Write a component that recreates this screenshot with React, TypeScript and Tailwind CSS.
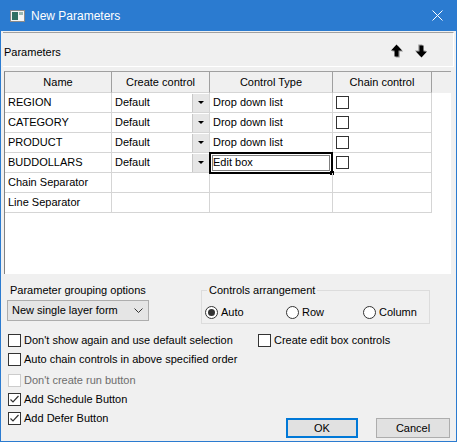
import { ReactNode } from 'react';

const ui = { fontFamily: '"Liberation Sans", Arial, sans-serif' };
const ms = { fontFamily: '"Liberation Sans", Arial, sans-serif' };

const rows = [
  { name: 'REGION', create: 'Default', type: 'Drop down list', check: true },
  { name: 'CATEGORY', create: 'Default', type: 'Drop down list', check: true },
  { name: 'PRODUCT', create: 'Default', type: 'Drop down list', check: true },
  { name: 'BUDDOLLARS', create: 'Default', type: 'Edit box', check: true, editing: true },
  { name: 'Chain Separator', create: '', type: '', check: false },
  { name: 'Line Separator', create: '', type: '', check: false },
];

function AppIcon() {
  return (
    <svg width="15" height="12" viewBox="0 0 15 12">
      <rect x="0.5" y="0.5" width="14" height="11" fill="#f4f4f4" stroke="#8a8a8a" />
      <rect x="2" y="2" width="6" height="8" fill="#2f6f63" />
      <rect x="9" y="2" width="4" height="3" fill="#9bb8b2" />
    </svg>
  );
}

function Arrow({ down }: { down?: boolean }) {
  return (
    <svg width="13" height="14" viewBox="0 0 13 14" className={down ? 'rotate-180' : ''}>
      <path d="M5.5 0.5 L11 6.5 L7.5 6.5 L7.5 12.5 L3.5 12.5 L3.5 6.5 L0 6.5 Z" fill="#9a9a9a" transform="translate(1.2 1)" />
      <path d="M5.5 0.5 L11 6.5 L7.5 6.5 L7.5 12.5 L3.5 12.5 L3.5 6.5 L0 6.5 Z" fill="#000" />
    </svg>
  );
}

function Check({ checked, disabled, children }: { checked?: boolean; disabled?: boolean; children: ReactNode }) {
  return (
    <label className={`flex items-center gap-[3px] text-[11px] ${disabled ? 'text-[#6d6d6d]' : 'text-black'}`} style={ui}>
      <span
        className={`w-[13px] h-[13px] border bg-white flex items-center justify-center ${
          disabled ? 'border-[#cccccc]' : 'border-[#333333]'
        }`}
      >
        {checked && (
          <svg width="11" height="11" viewBox="0 0 11 11">
            <path d="M1.5 5.5 L4 8 L9.5 2" fill="none" stroke="#333" strokeWidth="1.2" />
          </svg>
        )}
      </span>
      <span className="leading-none whitespace-nowrap">{children}</span>
    </label>
  );
}

function Radio({ on, children }: { on?: boolean; children: ReactNode }) {
  return (
    <label className="flex items-center gap-[3px] text-[11px]" style={ui}>
      <span className="w-[13px] h-[13px] rounded-full border border-[#333333] bg-white flex items-center justify-center">
        {on && <span className="w-[7px] h-[7px] rounded-full bg-[#333333]" />}
      </span>
      <span className="leading-none">{children}</span>
    </label>
  );
}

export default function App() {
  return (
    <div className="w-[457px] h-[442px] bg-[#f0f0f0] border border-t-0 border-[#2b7bd0] flex flex-col overflow-hidden text-black">
      {/* Title bar */}
      <div className="h-[31px] bg-[#2b7bd0] flex items-center pl-[9px] pr-[13px] shrink-0">
        <AppIcon />
        <span className="ml-[6px] text-white text-[12px]" style={ui}>New Parameters</span>
        <svg width="11" height="11" viewBox="0 0 11 11" className="ml-auto">
          <path d="M0.5 0.5 L10.5 10.5 M10.5 0.5 L0.5 10.5" stroke="#fff" strokeWidth="1" />
        </svg>
      </div>

      <div className="flex-1 flex flex-col px-[2px]">
        {/* Parameters header */}
        <div className="mt-[1px] h-[35px] pt-[5px] border-t border-t-[#a0a0a0] border-r border-b border-white flex items-center pl-[1px] pr-[26px]">
          <span className="text-[11px]" style={ui}>Parameters</span>
          <div className="ml-auto flex gap-[10px] -mt-[3px]">
            <Arrow />
            <Arrow down />
          </div>
        </div>

        {/* Grid */}
        <div className="mt-[4px] ml-[1px] mr-[3px] h-[203px] bg-white border-l border-t border-l-[#828282] border-t-[#a0a0a0]">
          <div className="grid grid-cols-[107px_98px_123px_99px_1fr]">
            {['Name', 'Create control', 'Control Type', 'Chain control'].map((h) => (
              <div
                key={h}
                className="h-[21px] bg-[#f0f0f0] border-r border-b border-r-[#a0a0a0] border-b-[#d5d5d5] flex items-center justify-center text-[11px]"
                style={ui}
              >
                {h}
              </div>
            ))}
            <div className="h-[21px] bg-[#f0f0f0]" />
            {rows.map((r) => (
              <Row key={r.name} r={r} />
            ))}
          </div>
        </div>

        {/* Lower options */}
        <div className="mt-[8px] flex pl-[4px]">
          <div className="w-[194px] flex flex-col">
            <span className="pl-[3px] text-[11px] leading-[16px]" style={ui}>Parameter grouping options</span>
            <div className="mt-[2px] w-[142px] h-[21px] bg-[#e5e5e5] border border-[#adadad] flex items-center pl-[4px] pr-[5px] text-[11px]" style={ui}>
              New single layer form
              <svg width="9" height="6" viewBox="0 0 9 6" className="ml-auto">
                <path d="M0.5 0.5 L4.5 4.5 L8.5 0.5" fill="none" stroke="#333" strokeWidth="1" />
              </svg>
            </div>
          </div>
          <div className="relative mt-[8px] w-[229px] h-[34px] border border-[#dcdcdc] flex items-end pb-[4px] pl-[3px]">
            <span className="absolute -top-[9px] left-[5px] bg-[#f0f0f0] px-[2px] text-[11px] leading-[16px]" style={ui}>
              Controls arrangement
            </span>
            <div className="w-[81px]">
              <Radio on>Auto</Radio>
            </div>
            <div className="w-[77px]">
              <Radio>Row</Radio>
            </div>
            <Radio>Column</Radio>
          </div>
        </div>

        <div className="mt-[10px] pl-[5px] flex">
          <div className="w-[250px]">
            <Check>Don't show again and use default selection</Check>
          </div>
          <Check>Create edit box controls</Check>
        </div>
        <div className="mt-[6px] pl-[5px]">
          <Check>Auto chain controls in above specified order</Check>
        </div>
        <div className="mt-[8px] pl-[5px] flex items-end">
          <div className="flex flex-col gap-[6px]">
            <Check disabled>Don't create run button</Check>
            <Check checked>Add Schedule Button</Check>
            <Check checked>Add Defer Button</Check>
          </div>
          <div className="ml-auto mr-[4px] mb-[-13px] flex gap-[18px]">
            <button className="w-[72px] h-[20px] bg-[#e1e1e1] border-2 border-[#0078d7] text-[11px]" style={ui}>
              OK
            </button>
            <button className="w-[74px] h-[20px] bg-[#e1e1e1] border border-[#adadad] text-[11px]" style={ui}>
              Cancel
            </button>
          </div>
        </div>
      </div>
    </div>
  );
}

function Row({ r }: { r: (typeof rows)[number] }) {
  const cell = 'h-[20px] border-r border-b border-[#d5d5d5] flex items-center text-[11px]';
  return (
    <>
      <div className={`${cell} pl-[3px]`} style={ms}>{r.name}</div>
      <div className={`${cell} pl-[3px] pr-[0px]`} style={ms}>
        {r.create}
        {r.check && (
          <span className="ml-auto w-[17px] h-[18px] bg-[#e6e6e6] border-l border-[#c8c8c8] flex items-center justify-center">
            <svg width="6" height="3" viewBox="0 0 6 3">
              <path d="M0 0 L6 0 L3 3 Z" fill="#000" />
            </svg>
          </span>
        )}
      </div>
      <div className={`${cell} pl-[3px] relative`} style={ms}>
        {r.type}
        {r.editing && (
          <span className="absolute -left-[1px] -top-[1px] w-[124px] h-[22px] border-2 border-black outline outline-1 -outline-offset-4 outline-[#808080]">
            <span className="absolute -right-[3px] -bottom-[3px] w-[4px] h-[4px] bg-black" />
          </span>
        )}
      </div>
      <div className={`${cell} pl-[3px]`}>
        {r.check && <span className="w-[13px] h-[13px] border border-[#333333] bg-white" />}
      </div>
      <div className="h-[20px]" />
    </>
  );
}
